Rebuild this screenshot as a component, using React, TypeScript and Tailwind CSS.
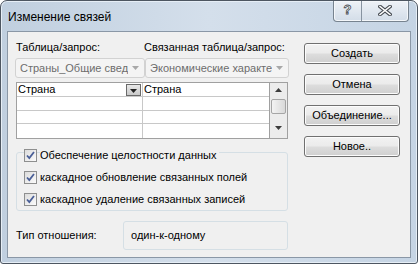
const font = "font-['Segoe_UI','Liberation_Sans',sans-serif] text-[11px]";

function Combo({ text }: { text: string }) {
  return (
    <div className="flex h-[20px] flex-1 items-center rounded-[3px] border border-[#d2d2d2] bg-[#f4f4f4] pl-[4px] pr-[5px] text-[#6d6d6d]">
      <span className="flex-1 overflow-hidden whitespace-nowrap">{text}</span>
      <svg width="7" height="4" viewBox="0 0 7 4" className="ml-[4px] shrink-0">
        <path d="M0 0h7L3.5 4z" fill="#a8a8a8" />
      </svg>
    </div>
  );
}

function Check({ label }: { label: string }) {
  return (
    <div className="flex h-[14px] items-center gap-[3px]">
      <div className="flex h-[13px] w-[13px] items-center justify-center border border-[#8e8f8f] bg-gradient-to-br from-[#dcdcdc] to-[#fbfbfb]">
        <svg width="9" height="9" viewBox="0 0 9 9">
          <path d="M1 4.5l2.3 2.6L8 1" fill="none" stroke="#4a5f97" strokeWidth="1.8" />
        </svg>
      </div>
      <span className="whitespace-nowrap bg-[#f0f0f0] pr-[3px]">{label}</span>
    </div>
  );
}

function Btn({ text }: { text: string }) {
  return (
    <button className="h-[21px] w-[96px] rounded-[3px] border border-[#707070] bg-[linear-gradient(#f2f2f2_0%,#ebebeb_48%,#dddddd_52%,#cfcfcf_100%)] text-center leading-[19px] text-black shadow-[inset_0_0_0_1px_#fcfcfc]">
      {text}
    </button>
  );
}

function GridRow({ first, second, header }: { first?: string; second?: string; header?: boolean }) {
  return (
    <div className="flex h-[14px] border-b border-[#c8c8c8] last:border-b-0">
      <div className="flex w-[126px] items-center border-r border-[#c8c8c8] pl-[1px]">
        <span className="flex-1 leading-[13px]">{first}</span>
        {header && (
          <div className="mr-[1px] flex h-[12px] w-[15px] items-end justify-center border border-[#6a6a6a] bg-gradient-to-b from-[#e8e8e8] to-[#c9c9c9] pb-[2px]">
            <svg width="7" height="4" viewBox="0 0 7 4">
              <path d="M0 0h7L3.5 4z" fill="#222" />
            </svg>
          </div>
        )}
      </div>
      <div className="flex flex-1 items-center pl-[1px] leading-[13px]">{second}</div>
    </div>
  );
}

export default function App() {
  return (
    <div className={`${font} h-[264px] w-[418px] bg-white`}>
      <div className="flex h-[264px] w-[418px] flex-col rounded-t-[7px] rounded-b-[3px] border border-[#4d5661] bg-gradient-to-r from-[#c0cfdf] via-[#d4dfeb] to-[#c5d4e4] shadow-[inset_0_0_0_1px_#e6eef6]">
        {/* title bar */}
        <div className="flex h-[30px] items-start">
          <div className="flex-1 pl-[7px] pt-[7px] text-[12px] text-black">Изменение связей</div>
          <div className="mr-[8px] flex h-[21px] overflow-hidden rounded-b-[4px] border border-t-0 border-[#77838f] bg-gradient-to-b from-[#eef2f7] to-[#d3dde8] shadow-[inset_0_0_0_1px_#f4f7fa]">
            <div className="flex w-[28px] items-center justify-center border-r border-[#8793a0] pb-[2px] font-bold text-[13px] text-white [-webkit-text-stroke:0.8px_#4a4f55]">
              ?
            </div>
            <div className="flex w-[46px] items-center justify-center pb-[1px]">
              <svg width="14" height="11" viewBox="0 0 14 11">
                <path d="M2 1.5l10 8M12 1.5l-10 8" stroke="#4a4f55" strokeWidth="3.6" strokeLinecap="square" />
                <path d="M2 1.5l10 8M12 1.5l-10 8" stroke="#ffffff" strokeWidth="1.6" strokeLinecap="square" />
              </svg>
            </div>
          </div>
        </div>

        {/* client area */}
        <div className="mx-[6px] flex h-[227px] border border-[#8a97a6] bg-[#f0f0f0] text-black">
          <div className="ml-[8px] flex w-[272px] flex-col">
            <div className="mt-[7px] flex h-[16px] items-center whitespace-nowrap">
              <span className="w-[128px]">Таблица/запрос:</span>
              <span>Связанная таблица/запрос:</span>
            </div>
            <div className="mt-[3px] -ml-[1px] flex">
              <Combo text="Страны_Общие свед" />
              <Combo text="Экономические характе" />
            </div>
            <div className="mt-[4px] flex h-[57px] border border-[#a0a0a0] bg-white">
              <div className="flex flex-1 flex-col">
                <GridRow first="Страна" second="Страна" header />
                <GridRow />
                <GridRow />
                <GridRow />
              </div>
              <div className="flex w-[18px] flex-col items-center border-l border-[#a0a0a0] bg-[#ececec]">
                <div className="flex h-[14px] items-center justify-center">
                  <svg width="7" height="4" viewBox="0 0 7 4">
                    <path d="M3.5 0L7 4H0z" fill="#3c3c3c" />
                  </svg>
                </div>
                <div className="mt-[2px] h-[15px] w-[15px] rounded-[2px] border border-[#a5a5a5] bg-gradient-to-r from-[#f3f3f3] to-[#d9d9d9]" />
                <div className="flex flex-1 items-center justify-center pt-[3px]">
                  <svg width="7" height="4" viewBox="0 0 7 4">
                    <path d="M0 0h7L3.5 4z" fill="#3c3c3c" />
                  </svg>
                </div>
              </div>
            </div>

            <div className="mt-[13px] flex h-[59px] flex-col gap-[8px] rounded-[3px] border border-[#d5dfe5] px-[7px]">
              <div className="-mt-[5px] self-start">
                <Check label="Обеспечение целостности данных" />
              </div>
              <Check label="каскадное обновление связанных полей" />
              <Check label="каскадное удаление связанных записей" />
            </div>

            <div className="mt-[10px] flex items-center">
              <span className="w-[107px]">Тип отношения:</span>
              <div className="flex h-[29px] flex-1 items-center rounded-[3px] border border-[#d5dfe5] pl-[7px]">
                один-к-одному
              </div>
            </div>
          </div>

          <div className="ml-[16px] mt-[11px] flex flex-col gap-[10px]">
            <Btn text="Создать" />
            <Btn text="Отмена" />
            <Btn text="Объединение..." />
            <Btn text="Новое.." />
          </div>
        </div>
      </div>
    </div>
  );
}
